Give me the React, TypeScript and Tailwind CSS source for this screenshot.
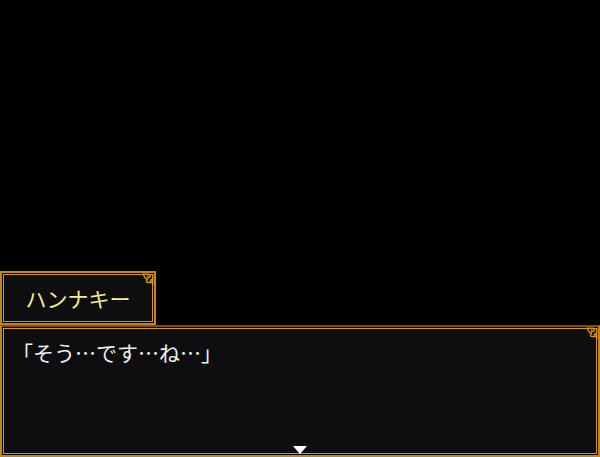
import React from 'react'

const jp = { fontFamily: '"Noto Sans CJK JP", "Noto Sans", sans-serif' }

// small curl ornament for the top-right corner of a window
function Corner({ className }: { className?: string }) {
  return (
    <svg viewBox="0 0 12 12" className={className} fill="none" stroke="#d8960e" strokeWidth="1.4">
      <path d="M1 1.2 H7 C9 1.2 9 4.2 7 4.2 C5.6 4.2 5.8 2.7 6.8 2.7" />
      <path d="M6.5 5.8 C4.6 5.8 4.6 8.8 6.5 8.8 H9.2 C10.8 8.8 10.8 6.2 9.4 6.2 C8.5 6.2 8.5 7.4 9.2 7.4" />
      <path d="M10.8 1 V11" />
      <path d="M2.5 1.2 C2.5 3.8 4.4 5.8 6.5 5.8" />
    </svg>
  )
}

function Frame({
  children,
  className,
  topClass,
}: {
  children: React.ReactNode
  className?: string
  topClass?: string
}) {
  return (
    <div className={`relative border-2 border-[#c48612] p-px ${topClass ?? ''} ${className ?? ''}`}>
      <div className="h-full border border-[#d8960f] bg-[#0e0e11]">{children}</div>
      <Corner className="absolute top-0 right-0 h-[13px] w-[13px]" />
    </div>
  )
}

export default function App() {
  return (
    <div className="flex h-[457px] w-[600px] flex-col bg-black" style={jp}>
      <div className="flex-1" />

      {/* speaker name */}
      <Frame className="h-[54px] w-[156px]">
        <div className="flex h-full items-center justify-center text-[21px] leading-[21px] text-[#f2ee8c]">
          ハンナキー
        </div>
      </Frame>

      {/* message window */}
      <Frame className="h-[132px] w-[600px]" topClass="border-t-[#7a5200]">
        <div className="relative h-full pl-[8px] pt-[13px] text-[21px] leading-[21px] text-[#f1f1f1]">
          「そう…です…ね…」
          <div className="absolute -bottom-px left-1/2 h-0 w-0 -translate-x-1/2 border-x-[7px] border-t-[8px] border-x-transparent border-t-white" />
        </div>
      </Frame>
    </div>
  )
}
